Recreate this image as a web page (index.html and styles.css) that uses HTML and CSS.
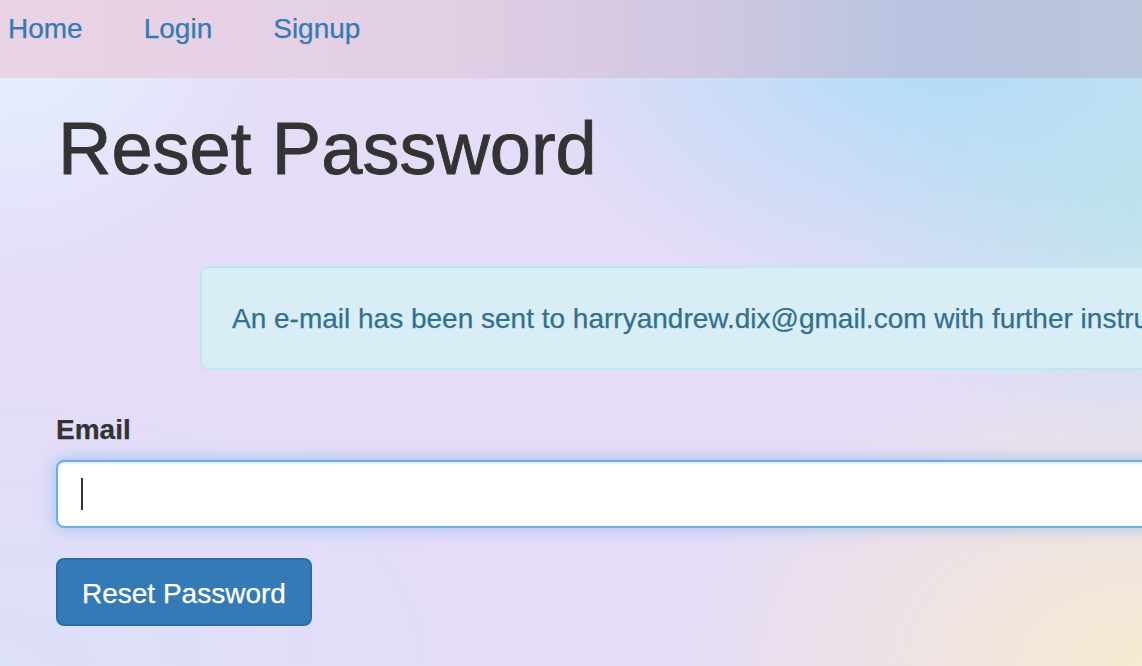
FILE: index.html
```html
<!DOCTYPE html>
<html lang="en">
<head>
<meta charset="utf-8">
<title>Reset Password</title>
<link rel="stylesheet" href="styles.css">
</head>
<body>
<nav class="navbar">
  <a class="nav-link" href="#">Home</a>
  <a class="nav-link" href="#">Login</a>
  <a class="nav-link" href="#">Signup</a>
</nav>
<main class="page">
  <h1 class="title">Reset Password</h1>
  <div class="alert">An e-mail has been sent to harryandrew.dix@gmail.com with further instructions.</div>
  <form class="form">
    <label class="label" for="email">Email</label>
    <div class="field">
      <input class="form-control" id="email" type="email">
      <span class="caret"></span>
    </div>
    <button class="btn" type="button">Reset Password</button>
  </form>
</main>
</body>
</html>
```

FILE: styles.css
```css
html, body {
  margin: 0;
  padding: 0;
  overflow: hidden;
  height: 100%;
}
body {
  font-family: "Liberation Sans", Arial, sans-serif;
  font-size: 28px;
  line-height: 40px;
  color: #333;
  -webkit-text-stroke: 0.25px currentColor;
  background:
    radial-gradient(ellipse 420px 300px at 82% 4%, rgba(172, 220, 246, 1) 0%, rgba(172, 220, 246, 0) 100%),
    radial-gradient(ellipse 300px 260px at 100% 30%, rgba(190, 230, 232, 0.9) 0%, rgba(190, 230, 232, 0) 100%),
    radial-gradient(ellipse 480px 320px at 100% 100%, rgba(246, 234, 208, 1) 0%, rgba(246, 234, 208, 0) 100%),
    radial-gradient(ellipse 300px 300px at 0% 0%, rgba(228, 244, 254, 1) 0%, rgba(228, 244, 254, 0) 100%),
    radial-gradient(ellipse 500px 300px at 0% 100%, rgba(220, 224, 248, 1) 0%, rgba(220, 224, 248, 0) 100%),
    #e5dcf8;
}
.navbar {
  height: 78px;
  box-sizing: border-box;
  padding: 9px 0 0 8px;
  display: flex;
  gap: 61px;
  background: linear-gradient(90deg, #e8d4e4 0%, #e4d0e4 35%, #d2c8e2 60%, #b8c4e0 80%, #bac6dc 100%);
}
.nav-link {
  color: #337ab7;
  text-decoration: none;
  line-height: 40px;
}
.page {
  width: 1500px;
  padding-left: 56px;
}
.title {
  margin: 30px 0 0 2px;
  font-size: 74px;
  line-height: 81px;
  font-weight: 500;
  color: #333;
  -webkit-text-stroke: 0.9px currentColor;
}
.alert {
  margin: 77px 0 0 144px;
  padding: 31px 30px 29px;
  border: 2px solid #bce8f1;
  border-radius: 8px;
  background: #d9edf7;
  color: #31708f;
  white-space: nowrap;
}
.form {
  margin-top: 40px;
}
.label {
  display: block;
  font-weight: bold;
  margin-bottom: 10px;
}
.field {
  position: relative;
}
.form-control {
  display: block;
  box-sizing: border-box;
  width: 100%;
  height: 68px;
  padding: 12px 24px;
  font: inherit;
  border: 2px solid #66afe9;
  border-radius: 8px;
  background: #fff;
  outline: none;
  box-shadow: inset 0 2px 2px rgba(0, 0, 0, 0.075), 0 0 16px rgba(102, 175, 233, 0.6);
}
.caret {
  position: absolute;
  left: 25px;
  top: 18px;
  width: 2px;
  height: 32px;
  background: #333;
}
.btn {
  margin-top: 30px;
  height: 68px;
  padding: 14px 24px 10px;
  font: inherit;
  color: #fff;
  background: #337ab7;
  border: 2px solid #2e6da4;
  border-radius: 8px;
}
```
